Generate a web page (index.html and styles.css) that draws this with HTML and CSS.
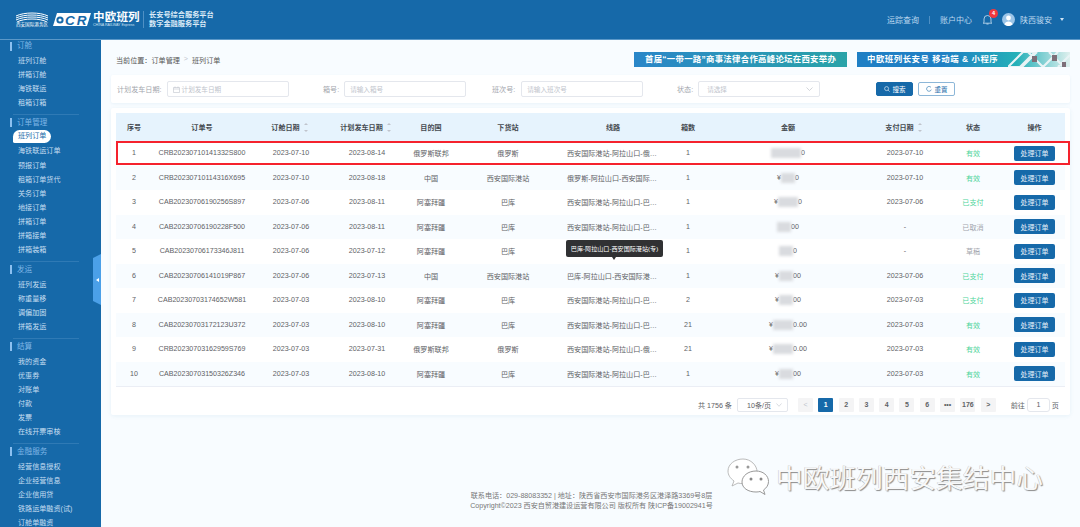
FILE: index.html
```html
<!DOCTYPE html>
<html lang="zh-CN">
<head>
<meta charset="utf-8">
<title>班列订单</title>
<link rel="stylesheet" href="styles.css">
</head>
<body>
<header class="topbar">
  <div class="brand">
    <div class="port-logo">
      <svg width="34" height="10" viewBox="0 0 34 10"><path d="M1 4C9 0 25 0 33 4M1 6C9 2 25 2 33 6M1 8C9 4 25 4 33 8M2 10C9 6 25 6 32 10" fill="none" stroke="#fff" stroke-width="1"/></svg>
      <span class="port-name">西安国际港务区</span>
    </div>
    <svg class="cr-logo" width="38" height="13" viewBox="0 0 38 13"><polygon points="4,0 38,0 34,13 0,13" fill="#fff"/><circle cx="7" cy="7" r="3.6" fill="#1669a9"/><circle cx="7" cy="7" r="1.6" fill="#fff"/><text x="12" y="11.500" class="cr-text">CR</text></svg>
    <div class="cr-name"><span class="cr-cn">中欧班列</span><span class="cr-en">CHINA RAILWAY Express</span></div>
    <div class="platform"><span>长安号综合服务平台</span><span>数字金融服务平台</span></div>
  </div>
  <nav class="topnav">
    <span class="topnav-link">运踪查询</span>
    <span class="topnav-sep"></span>
    <span class="topnav-link">账户中心</span>
    <span class="bell">
      <svg width="9" height="11" viewBox="0 0 9 11"><path d="M1 8.500V5a3.500 3.500 0 0 1 7 0v3.500L8.800 9.200H.2zM3.400 10h2.200" fill="none" stroke="#cfe3f4" stroke-width=".8"/></svg>
      <span class="badge">4</span>
    </span>
    <svg class="avatar" width="13" height="13" viewBox="0 0 13 13"><circle cx="6.500" cy="6.500" r="6.500" fill="#9cc5e8"/><circle cx="6.500" cy="5" r="2.400" fill="#fff"/><path d="M2.400 11.400a4.300 4.300 0 0 1 8.200 0A6.500 6.500 0 0 1 2.400 11.400z" fill="#fff"/></svg>
    <span class="topnav-link user">陕西骏安</span>
    <span class="caret"></span>
  </nav>
</header>

<div class="layout">
  <aside class="sidebar">
    <section class="menu">
      <h3 class="menu-title">订舱</h3>
      <a class="menu-item">班列订舱</a><a class="menu-item">拼箱订舱</a><a class="menu-item">海铁联运</a><a class="menu-item">租箱订箱</a>
    </section>
    <section class="menu">
      <h3 class="menu-title">订单管理</h3>
      <a class="menu-item active">班列订单</a><a class="menu-item">海铁联运订单</a><a class="menu-item">预报订单</a><a class="menu-item">租箱订单货代</a><a class="menu-item">关务订单</a><a class="menu-item">地接订单</a><a class="menu-item">拼箱订单</a><a class="menu-item">拼箱接单</a><a class="menu-item">拼箱装箱</a>
    </section>
    <section class="menu">
      <h3 class="menu-title">发运</h3>
      <a class="menu-item">班列发运</a><a class="menu-item">称重量移</a><a class="menu-item">调偏加固</a><a class="menu-item">拼箱发运</a>
    </section>
    <section class="menu">
      <h3 class="menu-title">结算</h3>
      <a class="menu-item">我的资金</a><a class="menu-item">优惠券</a><a class="menu-item">对账单</a><a class="menu-item">付款</a><a class="menu-item">发票</a><a class="menu-item">在线开票审核</a>
    </section>
    <section class="menu last">
      <h3 class="menu-title">金融服务</h3>
      <a class="menu-item">经营信息授权</a><a class="menu-item">企业经营信息</a><a class="menu-item">企业信用贷</a><a class="menu-item">铁路运单融资(试)</a><a class="menu-item">订舱单融资</a>
    </section>
    <span class="collapse"><span class="collapse-arrow"></span></span>
  </aside>

  <main class="content">
    <div class="crumbs-row">
      <div class="crumbs"><span>当前位置：</span><span>订单管理</span><span class="crumb-sep">&gt;</span><span>班列订单</span></div>
      <div class="banners">
        <div class="banner banner-a">首届“一带一路”商事法律合作高峰论坛在西安举办</div>
        <div class="banner banner-b">中欧班列长安号 移动端 &amp; 小程序
          <svg class="banner-art" width="62" height="15" viewBox="0 0 62 15"><path d="M0 15L15 0H27L12 15ZM14 15L29 0M20 0L35 15M35 15L50 0M41 0L56 15M50 15L62 3" fill="none" stroke="#e8f3f5" stroke-width="2.200"/><path d="M24 4h5v6h-5zM44 3h5v6h-5zM54 10h4v5h-4z" fill="#7d6f78"/></svg>
        </div>
      </div>
    </div>

    <form class="filters">
      <div class="field"><label class="field-label">计划发车日期:</label><span class="input"><svg width="7" height="7" viewBox="0 0 7 7"><path d="M.5 1.500h6v5h-6zM.5 3h6M2 .5v1.500M5 .5v1.500" fill="none" stroke="#c0c4cc" stroke-width=".6"/></svg>计划发车日期</span></div>
      <div class="field"><label class="field-label">箱号:</label><span class="input">请输入箱号</span></div>
      <div class="field"><label class="field-label wide">班次号:</label><span class="input">请输入班次号</span></div>
      <div class="field"><label class="field-label">状态:</label><span class="input select">请选择<svg width="7" height="4" viewBox="0 0 7 4"><path d="M.5.5l3 3 3-3" fill="none" stroke="#c0c4cc" stroke-width=".7"/></svg></span></div>
      <div class="filter-btns">
        <button type="button" class="btn btn-primary"><svg width="6" height="6" viewBox="0 0 6 6"><circle cx="2.600" cy="2.600" r="2" fill="none" stroke="#fff" stroke-width=".6"/><path d="M4.100 4.100L5.600 5.600" stroke="#fff" stroke-width=".6"/></svg>搜索</button>
        <button type="button" class="btn btn-outline"><svg width="6" height="6" viewBox="0 0 6 6"><path d="M5 1.500A2.400 2.400 0 1 0 5.300 3.600" fill="none" stroke="#1669a9" stroke-width=".6"/></svg>重置</button>
      </div>
    </form>

    <section class="card">
      <div class="table-wrap">
        <table class="orders">
          <colgroup><col class="c1"><col class="c2"><col class="c3"><col class="c4"><col class="c5"><col class="c6"><col class="c7"><col class="c8"><col class="c9"><col class="c10"><col class="c11"><col class="c12"></colgroup>
          <thead>
            <tr><th>序号</th><th>订单号</th><th class="sortable">订舱日期<i class="sort"></i></th><th class="sortable">计划发车日期<i class="sort"></i></th><th>目的国</th><th>下货站</th><th class="route-head">线路</th><th>箱数</th><th>金额</th><th class="sortable">支付日期<i class="sort"></i></th><th>状态</th><th>操作</th></tr>
          </thead>
          <tbody>
            <tr><td>1</td><td>CRB20230710141332S800</td><td>2023-07-10</td><td>2023-08-14</td><td>俄罗斯联邦</td><td>俄罗斯</td><td class="route">西安国际港站-阿拉山口-俄罗斯联邦</td><td>1</td><td><span class="blur p30"></span>0</td><td>2023-07-10</td><td class="ok">有效</td><td><button type="button" class="act">处理订单</button></td></tr>
            <tr><td>2</td><td>CRB20230710114316X695</td><td>2023-07-10</td><td>2023-08-18</td><td>中国</td><td>西安国际港站</td><td class="route">俄罗斯-阿拉山口-西安国际港站(专)</td><td>1</td><td>¥<span class="blur p14"></span>0</td><td>2023-07-10</td><td class="ok">有效</td><td><button type="button" class="act">处理订单</button></td></tr>
            <tr><td>3</td><td>CAB20230706190256S897</td><td>2023-07-06</td><td>2023-08-11</td><td>阿塞拜疆</td><td>巴库</td><td class="route">西安国际港站-阿拉山口-巴库(专)</td><td>1</td><td>¥<span class="blur p20"></span>0</td><td>2023-07-06</td><td class="ok">已支付</td><td><button type="button" class="act">处理订单</button></td></tr>
            <tr><td>4</td><td>CAB20230706190228F500</td><td>2023-07-06</td><td>2023-08-11</td><td>阿塞拜疆</td><td>巴库</td><td class="route">西安国际港站-阿拉山口-巴库(专)</td><td>1</td><td><span class="blur p14"></span>00</td><td>-</td><td class="off">已取消</td><td><button type="button" class="act">处理订单</button></td></tr>
            <tr><td>5</td><td>CAB20230706173346J811</td><td>2023-07-06</td><td>2023-07-12</td><td>阿塞拜疆</td><td>巴库</td><td class="route">巴库-阿拉山口-西安国际港站(专)</td><td>1</td><td><span class="blur p14"></span>0</td><td>-</td><td class="off">草稿</td><td><button type="button" class="act">处理订单</button></td></tr>
            <tr><td>6</td><td>CAB20230706141019P867</td><td>2023-07-06</td><td>2023-07-13</td><td>中国</td><td>西安国际港站</td><td class="route">巴库-阿拉山口-西安国际港站(专)</td><td>1</td><td>¥<span class="blur p14"></span>00</td><td>2023-07-06</td><td class="ok">已支付</td><td><button type="button" class="act">处理订单</button></td></tr>
            <tr><td>7</td><td>CAB20230703174652W581</td><td>2023-07-03</td><td>2023-08-10</td><td>阿塞拜疆</td><td>巴库</td><td class="route">西安国际港站-阿拉山口-巴库(专)</td><td>2</td><td>¥<span class="blur p14"></span>00</td><td>2023-07-03</td><td class="ok">已支付</td><td><button type="button" class="act">处理订单</button></td></tr>
            <tr><td>8</td><td>CAB20230703172123U372</td><td>2023-07-03</td><td>2023-08-10</td><td>阿塞拜疆</td><td>巴库</td><td class="route">西安国际港站-阿拉山口-巴库(专)</td><td>21</td><td>¥<span class="blur p20"></span>0.00</td><td>2023-07-03</td><td class="ok">有效</td><td><button type="button" class="act">处理订单</button></td></tr>
            <tr><td>9</td><td>CRB20230703162959S769</td><td>2023-07-03</td><td>2023-07-31</td><td>俄罗斯联邦</td><td>俄罗斯</td><td class="route">西安国际港站-阿拉山口-俄罗斯联邦</td><td>21</td><td>¥<span class="blur p20"></span>0.00</td><td>2023-07-03</td><td class="ok">有效</td><td><button type="button" class="act">处理订单</button></td></tr>
            <tr><td>10</td><td>CAB20230703150326Z346</td><td>2023-07-03</td><td>2023-08-10</td><td>阿塞拜疆</td><td>巴库</td><td class="route">西安国际港站-阿拉山口-巴库(专)</td><td>1</td><td>¥<span class="blur p14"></span>00</td><td>2023-07-03</td><td class="ok">有效</td><td><button type="button" class="act">处理订单</button></td></tr>
          </tbody>
        </table>
        <div class="highlight"></div>
        <div class="tooltip">巴库-阿拉山口-西安国际港站(专)</div>
      </div>

      <div class="pager">
        <span class="total">共 1756 条</span>
        <span class="size">10条/页<svg width="6" height="4" viewBox="0 0 6 4"><path d="M.5.5L3 3.300 5.500.5" fill="none" stroke="#c0c4cc" stroke-width=".6"/></svg></span>
        <div class="pages">
          <span class="page muted">&lt;</span><span class="page on">1</span><span class="page">2</span><span class="page">3</span><span class="page">4</span><span class="page">5</span><span class="page">6</span><span class="page">•••</span><span class="page">176</span><span class="page">&gt;</span>
        </div>
        <span class="jump">前往<span class="jump-input">1</span>页</span>
      </div>
    </section>

    <footer class="foot">
      <p>联系电话：029-88083352 | 地址：陕西省西安市国际港务区港泽路3369号8层</p>
      <p>Copyright©2023 西安自贸港建设运营有限公司 版权所有 陕ICP备19002941号</p>
    </footer>
  </main>
</div>

<div class="watermark">
  <svg width="44" height="38" viewBox="0 0 44 38"><path d="M16 1C8 1 1 6 1 13c0 4 2 7 6 10l-2 5 6-3c2 .5 3 .6 5 .6 8 0 14-6 14-12S24 1 16 1z" fill="#fff" stroke="#aaa" stroke-width=".8"/><path d="M29 13c-8 0-14 5-14 11s6 10 14 10c1.500 0 3-.2 4-.5l5 3-1.500-4.500c3-2 5-5 5-8.500 0-6-5.500-10.500-12.500-10.500z" fill="#fff" stroke="#999" stroke-width="1"/><circle cx="10" cy="9" r="1.500" fill="#999"/><circle cx="21" cy="9" r="1.500" fill="#999"/><circle cx="24" cy="21" r="1.500" fill="#888"/><circle cx="34" cy="21" r="1.500" fill="#888"/></svg>
  <span class="wm-text">中欧班列西安集结中心</span>
</div>
</body>
</html>
```
FILE: styles.css
```css
* { box-sizing: border-box; }
html, body { margin: 0; padding: 0; height: 527px; overflow: hidden; }
body { font-family: "Liberation Sans", "Noto Sans CJK SC", sans-serif; font-size: 7.100px; color: #606266; background: #f8fcff; }

.topbar { height: 40px; background: #1669a9; border-bottom: 1px solid #5b98c8; display: flex; justify-content: space-between; align-items: center; padding: 0 16px 0 15px; }
.brand { display: flex; align-items: center; color: #fff; }
.port-logo { width: 34px; display: flex; flex-direction: column; align-items: center; }
.port-name { font-size: 4.600px; line-height: 5px; white-space: nowrap; }
.cr-logo { margin-left: 4px; }
.cr-text { font: italic 700 13.500px "Liberation Sans", sans-serif; letter-spacing: 2px; fill: #1669a9; }
.cr-name { display: flex; flex-direction: column; margin-left: 2px; width: 50px; }
.cr-cn { font-size: 11.500px; font-weight: 700; letter-spacing: .2px; line-height: 12px; white-space: nowrap; }
.cr-en { font-size: 3.600px; line-height: 5px; color: #cfe3f4; white-space: nowrap; }
.platform { display: flex; flex-direction: column; border-left: 1px solid #4f90c4; padding-left: 5px; font-size: 7.200px; line-height: 8.500px; white-space: nowrap; font-weight: 700; color: #dcebf7; }

.topnav { display: flex; align-items: center; color: #bcd8ef; font-size: 8px; }
.topnav-link { white-space: nowrap; }
.topnav-sep { width: 1px; height: 8px; background: #4f90c4; margin: 0 10px; }
.bell { position: relative; display: flex; margin-left: 11px; }
.badge { position: absolute; left: 6px; top: -5px; width: 9px; height: 9px; border-radius: 50%; background: #f0383e; color: #fff; font-size: 5.500px; line-height: 9px; text-align: center; font-weight: 700; }
.avatar { margin-left: 10px; }
.user { margin-left: 5px; }
.caret { margin-left: 8px; width: 0; height: 0; border: 2.500px solid transparent; border-top: 3px solid #cfe3f4; border-bottom: 0; }

.layout { display: flex; height: 487px; }
.sidebar { position: relative; width: 101px; flex: none; background: #1669a9; color: #c6def1; overflow: hidden; }
.menu { margin: 0 22px 2px 13px; padding-bottom: 3.500px; border-bottom: 1px solid #2f7ab5; }
.menu.last { border: 0; }
.menu-title { position: relative; margin: 0 0 2px; height: 12px; line-height: 12px; padding-left: 4px; font-size: 7.600px; font-weight: 400; color: #7fb6e6; white-space: nowrap; }
.menu-title::before { content: ""; position: absolute; left: -3px; top: 1.500px; width: 2px; height: 9px; background: #8cc0f0; }
.menu-item { display: block; height: 14.100px; line-height: 14.100px; padding-left: 5px; font-size: 7.100px; white-space: nowrap; }
.menu-item.active { width: 38px; height: 13px; line-height: 13px; margin-bottom: 1.100px; margin-top: -.5px; padding-left: 5px; background: #fff; color: #1669a9; border-radius: 7px 7px 7px 2px; }
.collapse { position: absolute; right: 0; top: 214px; width: 8px; height: 51px; background: #4ba0e8; clip-path: polygon(0 4px, 100% 0, 100% 100%, 0 calc(100% - 4px)); display: flex; align-items: center; justify-content: center; }
.collapse-arrow { width: 0; height: 0; border: 2.500px solid transparent; border-right: 3px solid #fff; border-left: 0; }

.content { flex: 1; min-width: 0; padding: 12px 10px 0; }
.crumbs-row { display: flex; justify-content: space-between; align-items: center; height: 15px; }
.crumbs { display: flex; padding-left: 5px; font-size: 7.100px; white-space: nowrap; color: #555; }
.crumb-sep { margin: 0 4px; color: #c0c4cc; }
.banners { display: flex; gap: 10px; }
.banner { width: 213px; height: 15px; line-height: 15px; color: #fff; font-weight: 700; font-size: 8.400px; white-space: nowrap; }
.banner-a { background: linear-gradient(90deg, #2a86c8, #2aa3a8); padding-left: 11px; letter-spacing: .3px; }
.banner-b { position: relative; background: linear-gradient(90deg, #1f7fc4 40%, #25b0b8 75%, #dff0ee); padding-left: 10px; letter-spacing: .55px; }
.banner-art { position: absolute; right: 0; top: 0; }

.filters { margin-top: 8px; height: 28px; background: #fff; border-radius: 2px; box-shadow: 0 1px 3px rgba(30,110,170,.07); display: grid; grid-template-columns: 206px 169px 185px 199px 1fr; align-items: center; padding-left: 6px; }
.field { display: flex; align-items: center; }
.field-label { color: #a3a6ad; white-space: nowrap; margin-right: 5px; }
.field-label.wide { margin-right: 6px; }
.input { width: 122px; height: 16px; border: 1px solid #e4e7ed; border-radius: 2px; background: #fff; color: #c0c4cc; font-size: 6.600px; display: flex; align-items: center; gap: 2px; padding-left: 5px; white-space: nowrap; }
.select { justify-content: space-between; padding: 0 6px 0 8px; }
.filter-btns { display: flex; gap: 5px; }
.btn { width: 37px; height: 14px; border-radius: 2px; padding: 0; display: flex; align-items: center; justify-content: center; gap: 3px; font: 6.500px "Liberation Sans", "Noto Sans CJK SC", sans-serif; }
.btn-primary { background: #1669a9; border: 1px solid #1669a9; color: #fff; }
.btn-outline { background: #fff; border: 1px solid #8db7d8; color: #1669a9; }

.card { margin-top: 5px; height: 307px; background: #fff; border-radius: 2px; box-shadow: 0 1px 4px rgba(30,110,170,.08); padding: 5px 5px 0; }
.table-wrap { position: relative; }
.orders { width: 949px; border-collapse: collapse; table-layout: fixed; border-bottom: 1px solid #ebeef5; }
.c1 { width: 36px; } .c2 { width: 100px; } .c3 { width: 78px; } .c4 { width: 74px; } .c5 { width: 54px; } .c6 { width: 100px; }
.c7 { width: 110px; } .c8 { width: 40px; } .c9 { width: 160px; } .c10 { width: 74px; } .c11 { width: 62px; } .c12 { width: 61px; }
.orders th { height: 28px; background: #e6f3fd; color: #454a50; font-weight: 700; font-size: 7.100px; padding: 0; text-align: center; white-space: nowrap; }
.orders th.sortable { padding-right: 3px; }
.orders td { height: 24.500px; padding: 0; text-align: center; white-space: nowrap; overflow: hidden; font-size: 7.100px; }
.orders tbody tr:nth-child(even) td { background: #f8fcff; }
.orders td.route { padding: 0 9px 0 9px; text-overflow: ellipsis; text-align: left; }
.ok { color: #4ed49a; font-size: 7.600px; }
.off { color: #a3a6ad; }
.sort { display: inline-block; position: relative; width: 4px; height: 7px; margin-left: 4px; vertical-align: -1px; }
.sort::before, .sort::after { content: ""; position: absolute; left: 0; border: 2px solid transparent; }
.sort::before { top: -1px; border-bottom: 2.500px solid #c0c4cc; border-top: 0; }
.sort::after { bottom: -1px; border-top: 2.500px solid #c0c4cc; border-bottom: 0; }
.blur { display: inline-block; height: 10px; background: #d9dbdf; filter: blur(1.500px); vertical-align: middle; }
.p14 { width: 14px; } .p20 { width: 20px; } .p30 { width: 30px; }
.act { width: 41px; height: 15px; border: 0; border-radius: 2px; padding: 0; background: #1669a9; color: #e4f0fa; font: 7px "Liberation Sans", "Noto Sans CJK SC", sans-serif; }

.highlight { position: absolute; left: 0; top: 28px; width: 954px; height: 24px; border: 2px solid #f5222d; }
.tooltip { position: absolute; left: 450px; top: 126.500px; width: 97px; height: 17px; line-height: 17px; background: #303133; color: #fff; border-radius: 2px; text-align: center; font-size: 6.100px; white-space: nowrap; }
.tooltip::after { content: ""; position: absolute; left: 46px; top: 17px; border: 2.500px solid transparent; border-top: 3px solid #303133; border-bottom: 0; }

.pager { display: flex; align-items: center; height: 14px; margin-top: 11px; padding-left: 582px; color: #606266; }
.total { width: 39px; white-space: nowrap; }
.size { width: 51px; height: 14px; border: 1px solid #e4e7ed; border-radius: 2px; display: flex; align-items: center; justify-content: space-between; padding: 0 5px 0 9px; color: #606266; }
.pages { display: flex; gap: 5.300px; margin-left: 10px; }
.page { width: 15px; height: 14px; line-height: 14px; background: #f4f4f5; border-radius: 1px; text-align: center; font-weight: 700; color: #606266; font-size: 7px; }
.page.muted { color: #c0c4cc; font-weight: 400; }
.page.on { background: #1669a9; color: #fff; }
.jump { display: flex; align-items: center; gap: 2px; margin-left: 15px; white-space: nowrap; }
.jump-input { width: 23px; height: 14px; line-height: 12px; border: 1px solid #e4e7ed; border-radius: 3px; text-align: center; }

.foot { margin-top: 76px; text-align: center; padding-left: 2px; color: #777; font-size: 7.100px; line-height: 10px; }
.foot p { margin: 0; }

.watermark { position: absolute; left: 727px; top: 458px; display: flex; align-items: center; gap: 5px; }
.wm-text { font-size: 26.700px; line-height: 30px; white-space: nowrap; color: #f7f8f9; font-weight: 400; text-shadow: 1px 1px 1px #8c8c8c, -.3px -.3px .4px #b5b5b5; margin-top: 3px; }
```
